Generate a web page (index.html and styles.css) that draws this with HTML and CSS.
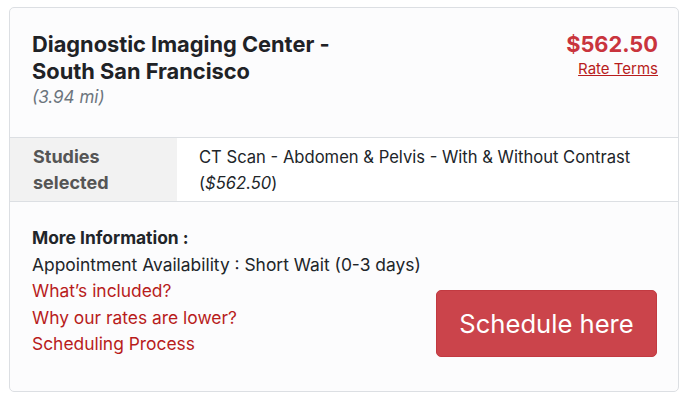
FILE: index.html
```html
<!DOCTYPE html>
<html lang="en">
<head>
  <meta charset="UTF-8">
  <meta name="viewport" content="width=device-width, initial-scale=1.0">
  <title>Diagnostic Imaging Center - South San Francisco</title>
  <link rel="stylesheet" href="styles.css">
</head>
<body>
  <div class="card">
    <div class="card-head">
      <div class="center">
        <h2 class="center-name">Diagnostic Imaging Center -<br>South San Francisco</h2>
        <p class="distance">(3.94 mi)</p>
      </div>
      <div class="price">
        <p class="price-value">$562.50</p>
        <a href="#" class="rate-terms">Rate Terms</a>
      </div>
    </div>

    <table class="studies">
      <tr>
        <th>Studies<br>selected</th>
        <td>CT Scan - Abdomen &amp; Pelvis - With &amp; Without Contrast (<em>$562.50</em>)</td>
      </tr>
    </table>

    <div class="card-foot">
      <div class="more-info">
        <p class="more-title">More Information :</p>
        <p>Appointment Availability : Short Wait (0-3 days)</p>
        <a href="#">What’s included?</a>
        <a href="#">Why our rates are lower?</a>
        <a href="#">Scheduling Process</a>
      </div>
      <button class="schedule">Schedule here</button>
    </div>
  </div>
</body>
</html>
```

FILE: styles.css
```css
body {
  margin: 0;
  background: #fff;
  font-family: Inter, "Noto Sans", "Liberation Sans", sans-serif;
  color: #212529;
}

p {
  margin: 0;
}

.card {
  margin: 7px 11px 0 9px;
  border: 1px solid #dcdfe3;
  border-radius: 5px;
  background: #fcfcfd;
  overflow: hidden;
}

.card-head {
  display: flex;
  justify-content: space-between;
  padding: 23px 20px 28px 22px;
}

.center-name {
  margin: 0;
  font-size: 21.8px;
  line-height: 27px;
  font-weight: 700;
  color: #1f2226;
}

.distance {
  font-size: 17px;
  line-height: 24px;
  font-style: italic;
  color: #6c757d;
}

.price {
  text-align: right;
}

.price-value {
  font-size: 21.8px;
  line-height: 27px;
  font-weight: 700;
  color: #c9343d;
}

.rate-terms {
  font-size: 15px;
  line-height: 22px;
  color: #b81c1c;
}

.studies {
  width: 100%;
  border-collapse: collapse;
  border-top: 1px solid #dcdfe3;
  border-bottom: 1px solid #dcdfe3;
}

.studies th {
  width: 144px;
  padding: 6px 0 5px 23px;
  text-align: left;
  vertical-align: top;
  font-size: 18px;
  line-height: 26px;
  font-weight: 700;
  color: #555;
  background: #f2f2f2;
}

.studies td {
  padding: 6px 20px 5px 22px;
  vertical-align: top;
  font-size: 16.6px;
  line-height: 26px;
  background: #fff;
}

.card-foot {
  display: flex;
  justify-content: space-between;
  align-items: flex-end;
  padding: 23px 21px 33px 22px;
}

.more-info {
  display: flex;
  flex-direction: column;
  font-size: 17.4px;
  line-height: 26.5px;
}

.more-title {
  font-weight: 700;
}

.more-info a {
  color: #b81c1c;
  text-decoration: none;
}

.schedule {
  width: 221px;
  height: 67px;
  margin-bottom: 1px;
  border: 1px solid #c23a41;
  border-radius: 5px;
  background: #cb444b;
  color: #fff;
  font-family: inherit;
  font-size: 25.6px;
  cursor: pointer;
}
```
